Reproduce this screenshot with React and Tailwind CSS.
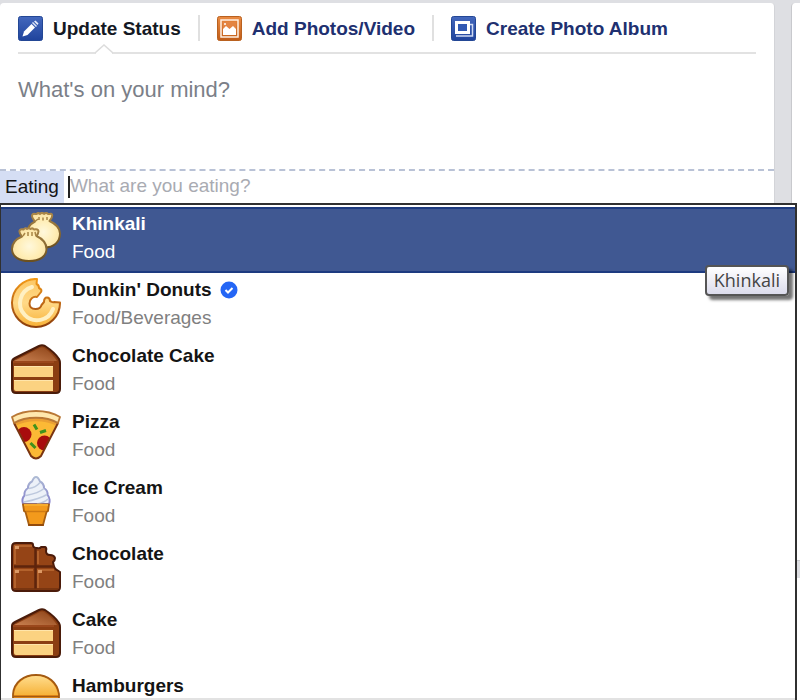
import React, { useState } from 'react';

const DumplingIcon = () => (
  <svg viewBox="0 0 50 50" className="my-px size-[50px] shrink-0">
    <defs>
      <radialGradient id="dough" cx="50%" cy="55%" r="60%">
        <stop offset="0" stopColor="#fff8dc" />
        <stop offset="0.6" stopColor="#ffedb4" />
        <stop offset="1" stopColor="#fae0a0" />
      </radialGradient>
      <linearGradient id="doughEdge" x1="0" y1="0" x2="0" y2="1">
        <stop offset="0" stopColor="#ab8748" />
        <stop offset="1" stopColor="#6b5020" />
      </linearGradient>
    </defs>
    <g fill="url(#dough)" stroke="url(#doughEdge)" strokeWidth="2" strokeLinejoin="round">
      <path d="M24 9.500C22 7 20 4 21.500 2.500C23 1 24 2.500 25.500 2C27 0.500 28 1 29 2C30 0.500 32 0.500 33 2C34 1 36 0.500 37 2C38.500 2.500 40 1 41 2.500C42 5 40 7 38.500 9C45 12 49 16 49 21.500C49 30 43 35.500 33 35.500C23 35.500 16 30 16 22C16 16 19 12 24 9.500Z" />
      <path d="M11 24.500C9 22 7.500 19.500 9 18C10.500 16.500 11 17.500 12.500 17.500C14 16 15 16 16 17C17.500 16 18.500 16 19.500 17C21 16 22 16 23 17.500C24.500 17.500 25.500 16.500 27 18C28 19.500 27 22 25.500 24C32 27 35.500 31 35.500 37C35.500 44.500 28.500 49 18 49C8 49 1 44.500 1 37C1 31 5 27 11 24.500Z" />
    </g>
    <path d="M24 9.500l3-2.500M28 5v3M32 5.500v3M36 5l0 3M12 24l2-3M17 20v4M21 20v4M25 24l-1-4" fill="none" stroke="#a98545" strokeWidth="1.500" />
  </svg>
);

const DonutIcon = () => (
  <svg viewBox="0 0 50 50" className="my-px size-[50px] shrink-0">
    <defs>
      <linearGradient id="donut" x1="0" y1="0" x2="0" y2="1">
        <stop offset="0" stopColor="#fcc763" />
        <stop offset="0.5" stopColor="#ffd987" />
        <stop offset="1" stopColor="#f8b136" />
      </linearGradient>
      <linearGradient id="donutEdge" x1="0" y1="0" x2="0" y2="1">
        <stop offset="0" stopColor="#f39a17" />
        <stop offset="0.6" stopColor="#b55f15" />
        <stop offset="1" stopColor="#8c3f0b" />
      </linearGradient>
    </defs>
    <path d="M26 1L25.500 6C28 7 28 9 28 10C30 11 31 12 30 14L26 19C22 18 18.500 21 18.500 25.500C18.500 29 21 31 24.500 31C28 31 30 29 30.500 27L33 24C33 21 34 19.500 36 19.500C38 19.500 39 21 39 23C41 24 42 25 43 24L49 24.500A24 24 0 1 1 26 1Z" fill="url(#donut)" />
    <path d="M21 9A17 17 0 1 0 42 31" fill="none" stroke="#fff0c2" strokeWidth="4" strokeLinecap="round" />
    <path d="M26 1L25.500 6C28 7 28 9 28 10C30 11 31 12 30 14L26 19C22 18 18.500 21 18.500 25.500C18.500 29 21 31 24.500 31C28 31 30 29 30.500 27L33 24C33 21 34 19.500 36 19.500C38 19.500 39 21 39 23C41 24 42 25 43 24L49 24.500A24 24 0 1 1 26 1Z" fill="none" stroke="url(#donutEdge)" strokeWidth="2" strokeLinejoin="round" />
  </svg>
);

const CakeIcon = () => (
  <svg viewBox="0 0 50 50" className="my-px size-[50px] shrink-0">
    <defs>
      <linearGradient id="icing" x1="0" y1="1" x2="1" y2="0">
        <stop offset="0" stopColor="#c98050" />
        <stop offset="1" stopColor="#8d4317" />
      </linearGradient>
    </defs>
    <path d="M1 18C1 16 2 15 4 14L28 2C31 0.500 32 1 34 2C40 6 45 10 48 15Q49 17 49 19V45Q49 49 45 49H5Q1 49 1 45Z" fill="#8b3e12" stroke="#4a1c0a" strokeWidth="2" />
    <path d="M3 17L29 4Q31 3 33 4C39 8 43 12 46 17Z" fill="url(#icing)" />
    <path d="M2 18H43" stroke="#a04d20" strokeWidth="1.500" />
    <rect x="3" y="22" width="39" height="11" fill="#fbd281" />
    <path d="M3 36H42V47H5Q3 47 3 45Z" fill="#fbd281" />
    <path d="M3 22.500H42M3 36.500H42" stroke="#ffe5aa" />
  </svg>
);

const PizzaIcon = () => (
  <svg viewBox="0 0 50 50" className="my-px size-[50px] shrink-0">
    <defs>
      <clipPath id="slice">
        <path d="M3 11C15 4 35 4 47 11L30 46Q25 51 20 46Z" />
      </clipPath>
    </defs>
    <g clipPath="url(#slice)">
      <rect width="50" height="50" fill="#fcb935" />
      <circle cx="13" cy="24.500" r="7.500" fill="#a80d0d" />
      <circle cx="33.500" cy="33" r="7.500" fill="#a80d0d" />
      <path d="M3 15C16 8 34 8 47 15" fill="none" stroke="#eba033" strokeWidth="3" />
    </g>
    <path d="M23 14.500l3 5M29 22.500l6-2M19.500 33l5 5" stroke="#3f921b" strokeWidth="3" />
    <path d="M3 13L20 46Q25 51 30 46L47 13" fill="none" stroke="#7a3410" strokeWidth="2" />
    <path d="M1 7C14 -1 36 -1 49 7L47 13C35 6 15 6 3 13Z" fill="#ffe8ae" stroke="#b97836" strokeWidth="1.800" strokeLinejoin="round" />
  </svg>
);

const IceCreamIcon = () => (
  <svg viewBox="0 0 50 50" className="my-px size-[50px] shrink-0">
    <defs>
      <linearGradient id="swirlEdge" x1="0" y1="0" x2="0" y2="1">
        <stop offset="0" stopColor="#aebbd4" />
        <stop offset="1" stopColor="#8480cc" />
      </linearGradient>
    </defs>
    <path d="M25 1C27 1 28 3 29 5.500C32 7 33 9 33 12C36 14 37 16 36.500 19C39 21 39 26 38 28H12C11 25 11 22 13.500 19.500C13 16 14 14 17 12C17 9 18 7 21 5.500C22 3 23 1 25 1Z" fill="#edf1f8" stroke="url(#swirlEdge)" strokeWidth="2" strokeLinejoin="round" />
    <path d="M18 12.500C23 12 27 9 29 6.500M15 19.500C23 18 29 16 33 12.500M13 26C23 24 32 21 36 18.500M26 28C31 27 35 25 37 23" fill="none" stroke="#bdc8dd" strokeWidth="1.500" />
    <path d="M12 28.500H38L37 35L35.500 36L32 49H18L14.500 36L13 35Z" fill="#f39a1c" stroke="#a85f10" strokeWidth="1.800" strokeLinejoin="round" />
    <path d="M13 29H37" stroke="#f7ac2c" strokeWidth="2" />
    <path d="M15 35.500H35" stroke="#cf7a13" strokeWidth="1.500" />
    <path d="M17 49H33" stroke="#8d450b" strokeWidth="1.500" />
  </svg>
);

const ChocolateIcon = () => (
  <svg viewBox="0 0 50 50" className="my-px size-[50px] shrink-0">
    <path d="M5 1H20Q22 1 22 3Q22 6 26 6Q29 7 30 5H34Q36 6 35 9Q35 13 39 13Q43 13 44 16Q44 19 42 20Q43 27 46 28L49 30V45Q49 49 45 49H5Q1 49 1 45V5Q1 1 5 1Z" fill="#954416" stroke="#4b1b0a" strokeWidth="2" strokeLinejoin="round" />
    <path d="M3 24.500H43M24.500 7V47" stroke="#5e240c" strokeWidth="2.500" />
    <path d="M4 22V4H21M4 46V28H22M27 22V9M27 46V28H43" fill="none" stroke="#b3622c" strokeWidth="2" />
    <path d="M4 4h4v3H4zM4 28h4v3H4zM27 28h4v3h-4z" fill="#dc9965" />
    <path d="M3 47H47" stroke="#71300f" strokeWidth="1.500" />
  </svg>
);

const BurgerIcon = () => (
  <svg viewBox="0 0 50 50" className="my-px size-[50px] shrink-0">
    <defs>
      <linearGradient id="bun" x1="0" y1="0" x2="0" y2="1">
        <stop offset="0" stopColor="#ffdc8c" />
        <stop offset="1" stopColor="#f6b33b" />
      </linearGradient>
    </defs>
    <path d="M2 40V20C3 8 13 1 25 1C37 1 46 8 48 20V40Q48 49 40 49H10Q2 49 2 40Z" fill="#ef9018" stroke="#a35a12" strokeWidth="1.800" />
    <path d="M3 21C4 9 14 2 25 2C36 2 45 9 47 21Z" fill="url(#bun)" />
    <path d="M2 22.500H48" stroke="#a35a12" strokeWidth="1.500" />
    <path d="M3 30H47V38H3Z" fill="#6b2e10" />
  </svg>
);

const VerifiedBadge = () => (
  <svg viewBox="0 0 18 18" className="size-[18px]" aria-label="Verified">
    <circle cx="9" cy="9" r="8.500" fill="#2466f5" />
    <path d="M5.500 9l2.500 2.500 4.500-4.500" fill="none" stroke="#fff" strokeWidth="2" />
  </svg>
);

const PencilIcon = () => (
  <svg viewBox="0 0 25 25" className="size-[25px]">
    <defs>
      <linearGradient id="blueTile" x1="0" y1="0" x2="0" y2="1">
        <stop offset="0" stopColor="#4468bd" />
        <stop offset="1" stopColor="#1f439c" />
      </linearGradient>
    </defs>
    <rect x="0.500" y="0.500" width="24" height="24" rx="2" fill="url(#blueTile)" stroke="#234795" />
    <path d="M4.500 20.500L6 15.500L13.500 8L17 11.500L9.500 19Z" fill="#fff" />
    <path d="M14.500 6.500L18.500 10.500" stroke="#dfe7f8" strokeWidth="1.500" />
    <path d="M16 5.500L17.500 4.500L20.500 7.500L19.500 9Z" fill="#e6ecfa" />
  </svg>
);

const PhotoIcon = () => (
  <svg viewBox="0 0 25 25" className="size-[25px]">
    <defs>
      <linearGradient id="orangeTile" x1="0" y1="0" x2="0" y2="1">
        <stop offset="0" stopColor="#ea8b43" />
        <stop offset="1" stopColor="#c05c17" />
      </linearGradient>
    </defs>
    <rect x="0.500" y="0.500" width="24" height="24" rx="2" fill="url(#orangeTile)" stroke="#b9611f" />
    <rect x="4" y="4" width="17" height="17" fill="none" stroke="#fff0e2" strokeWidth="1.500" />
    <rect x="6" y="6" width="13" height="13" fill="#e38442" />
    <path d="M6 19V13L9 10L12.500 13L16 10L19 13V19Z" fill="#fff" />
    <circle cx="8" cy="8" r="1" fill="#fff" />
  </svg>
);

const AlbumIcon = () => (
  <svg viewBox="0 0 25 25" className="size-[25px]">
    <rect x="0.500" y="0.500" width="24" height="24" rx="2" fill="url(#blueTile)" stroke="#234795" />
    <path d="M5 20H21.500V8.500H19" fill="none" stroke="#cfdaf3" strokeWidth="1.500" />
    <rect x="5.500" y="6.500" width="12" height="10" fill="#3159b3" stroke="#fff" strokeWidth="3" />
  </svg>
);

const tabs = [
  { label: 'Update Status', Icon: PencilIcon },
  { label: 'Add Photos/Video', Icon: PhotoIcon },
  { label: 'Create Photo Album', Icon: AlbumIcon },
];

const foods = [
  { name: 'Khinkali', type: 'Food', Icon: DumplingIcon },
  { name: "Dunkin' Donuts", type: 'Food/Beverages', Icon: DonutIcon, verified: true },
  { name: 'Chocolate Cake', type: 'Food', Icon: CakeIcon },
  { name: 'Pizza', type: 'Food', Icon: PizzaIcon },
  { name: 'Ice Cream', type: 'Food', Icon: IceCreamIcon },
  { name: 'Chocolate', type: 'Food', Icon: ChocolateIcon },
  { name: 'Cake', type: 'Food', Icon: CakeIcon },
  { name: 'Hamburgers', type: 'Food', Icon: BurgerIcon },
];

const ComposerTabs = ({ active, onSelect }) => (
  <nav className="mx-[18px] flex border-b-2 border-[#e2e2e2] pt-3 pb-[11px]">
    {tabs.map(({ label, Icon }, i) => (
      <div key={label} className="flex items-center">
        {i > 0 && <span className="mx-[17px] h-[26px] w-[2px] bg-[#e0e0e0]" />}
        <button
          type="button"
          onClick={() => onSelect(label)}
          className={`relative flex items-center gap-[10px] text-[19px] leading-[24px] font-bold whitespace-nowrap ${active === label ? 'text-[#141823]' : 'text-[#203070]'}`}
        >
          <Icon />
          <span className="pt-[2px]">{label}</span>
          {active === label && (
            <svg viewBox="0 0 18 10" className="absolute top-full left-1/2 mt-[3px] h-[10px] w-[18px] -translate-x-1">
              <path d="M1 8L9 1L17 8V10H1Z" fill="#fff" />
              <path d="M0 9L9 1L18 9" fill="none" stroke="#dcdcdc" strokeWidth="1.500" />
            </svg>
          )}
        </button>
      </div>
    ))}
  </nav>
);

const FoodRow = ({ food, selected, onSelect }) => (
  <li>
    <button
      type="button"
      onClick={onSelect}
      className={`flex h-[66px] w-full items-start gap-[11px] border-y-2 pt-[2px] pl-[10px] text-left text-[19px] ${selected ? 'border-[#1d3b80] bg-[#405892] text-white' : 'border-transparent text-[#141414]'}`}
    >
      <food.Icon />
      <span className="flex flex-col gap-[6px] pt-[2px] leading-[22px]">
        <span className="flex items-center gap-[8px] font-bold">
          {food.name}
          {food.verified && <VerifiedBadge />}
        </span>
        <span className={selected ? 'text-white' : 'text-[#808080]'}>{food.type}</span>
      </span>
    </button>
  </li>
);

export default function App() {
  const [tab, setTab] = useState('Update Status');
  const [status, setStatus] = useState('');
  const [query, setQuery] = useState('');
  const [selected, setSelected] = useState('Khinkali');

  return (
    <div className="flex h-screen gap-4 overflow-hidden bg-[#dedfe3] pt-[3px] font-['Liberation_Sans',Arial,sans-serif]">
      <main className="flex min-w-0 flex-1 flex-col rounded-t-[4px] border-r border-[#d3d4d8] bg-white">
        <ComposerTabs active={tab} onSelect={setTab} />

        <textarea
          aria-label="Status"
          placeholder="What's on your mind?"
          value={status}
          onChange={(e) => setStatus(e.target.value)}
          className="block h-[115px] w-full shrink-0 resize-none px-[18px] pt-[22px] text-[22px] leading-[28px] outline-none placeholder:text-[#7b7f88]"
        />

        <div className="flex h-[34px] shrink-0 items-stretch border-t-2 border-dashed border-[#b9c2d6] text-[19px]">
          <label htmlFor="eating" className="flex items-center bg-[#d5def4] px-[5px] text-[#141414]">Eating</label>
          <span className="ml-[4px] h-[22px] w-[2px] self-center bg-[#222]" />
          <input
            id="eating"
            type="text"
            placeholder="What are you eating?"
            value={query}
            onChange={(e) => setQuery(e.target.value)}
            className="min-w-0 flex-1 pb-[2px] outline-none placeholder:text-[#a9abb2]"
          />
        </div>

        <div className="relative z-10 -mr-[23px] flex min-h-0 flex-1 flex-col border-t-2 border-r-2 border-l border-[#303030] bg-white pt-[2px]">
          <ul className="min-h-0 flex-1 overflow-hidden">
            {foods.map((food) => (
              <FoodRow key={food.name} food={food} selected={selected === food.name} onSelect={() => setSelected(food.name)} />
            ))}
          </ul>
          <div className="h-[2px] bg-[#e2e2e2]" />
          <div
            role="tooltip"
            className="absolute top-[60px] right-[6px] rounded-[4px] border-2 border-[#555] bg-linear-to-b from-white to-[#dcdcec] px-[7px] font-['Open_Sans',sans-serif] text-[18px] leading-[27px] text-[#444] shadow-[4px_4px_3px_rgba(0,0,0,0.55)]"
          >
            {selected}
          </div>
        </div>
      </main>

      <aside className="flex w-[9px] shrink-0 flex-col gap-[17px]">
        <div className="h-[558px] shrink-0 rounded-tl-[4px] border-b border-l border-[#c8c9cd] bg-white" />
        <div className="flex-1 border-l border-[#c8c9cd] bg-white" />
      </aside>
    </div>
  );
}
